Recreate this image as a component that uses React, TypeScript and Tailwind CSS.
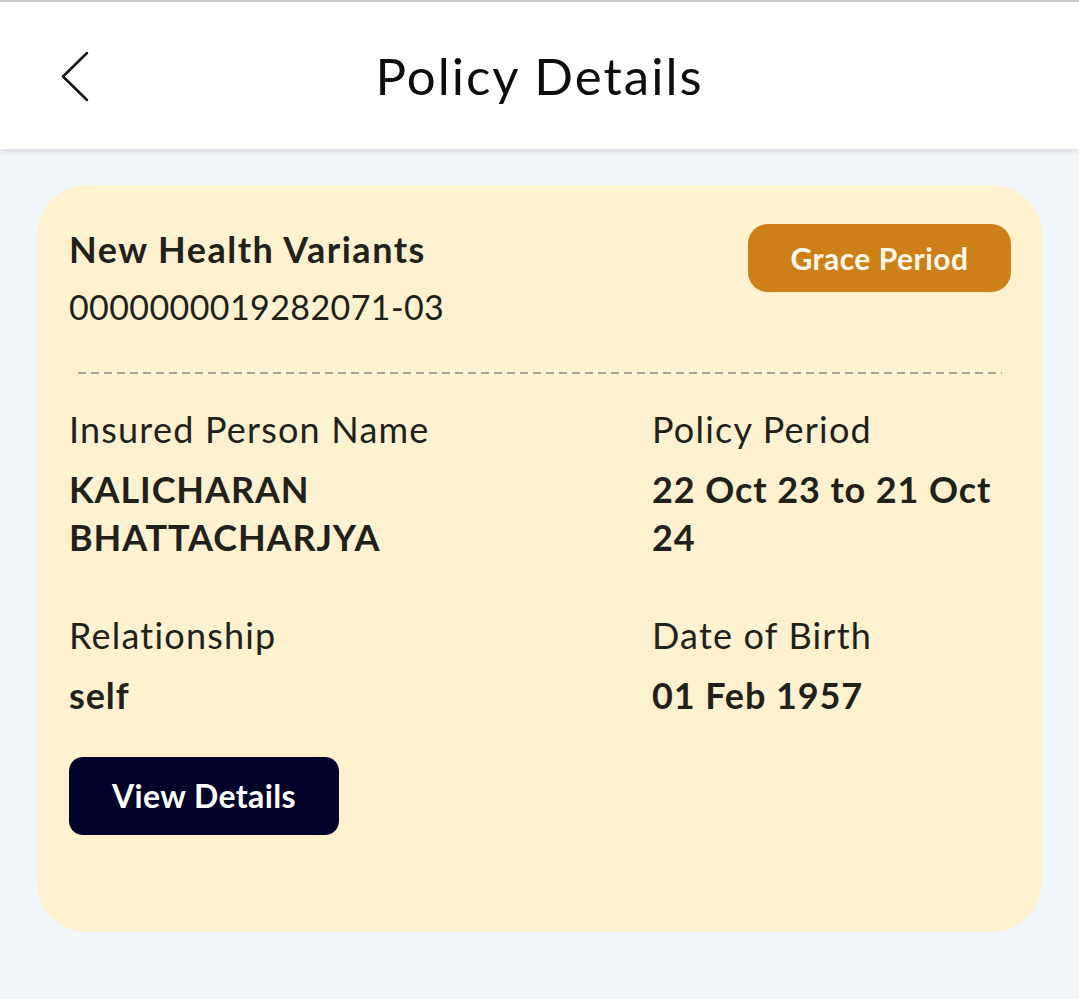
const font = { fontFamily: "Lato, 'Noto Sans', sans-serif" };

function Field({ label, value, right }: { label: string; value: string; right?: boolean }) {
  return (
    <div className={right ? "min-w-0 pr-[4px]" : "min-w-0 pr-[60px]"}>
      <p className="text-[36px] leading-[48px] tracking-[1.2px] text-[#231f1a]">{label}</p>
      <p className="mt-[12px] text-[36px] font-bold leading-[48px] tracking-[0.9px] text-[#231f1a]">{value}</p>
    </div>
  );
}

export default function App() {
  return (
    <div style={font} className="min-h-[999px] w-full bg-[#f1f6fb]">
      <header className="relative z-10 flex h-[149px] items-center border-t-2 border-[#c9c9c9] bg-white shadow-[0_2px_6px_rgba(0,0,0,0.12)]">
        <button type="button" className="absolute left-[58px] top-[49px]" aria-label="Back">
          <svg width="34" height="52" viewBox="0 0 34 52" fill="none">
            <path d="M29 2 L5 25.5 L29 49" stroke="#111" strokeWidth="2.5" strokeLinecap="round" strokeLinejoin="round" />
          </svg>
        </button>
        <h1 className="w-full text-center text-[51px] leading-none tracking-[2px] text-[#0d0d0d]">Policy Details</h1>
      </header>

      <main className="px-[37px] pt-[36px]">
        <section className="h-[747px] rounded-[50px] bg-[#fef1cf] px-[32px] pt-[40px]">
          <div className="flex items-start justify-between">
            <div>
              <h2 className="text-[36px] font-bold leading-[48px] tracking-[1.5px] text-[#231f1a]">New Health Variants</h2>
              <p className="mt-[12px] text-[34px] leading-[44px] tracking-[0.4px] text-[#231f1a]">0000000019282071-03</p>
            </div>
            <span className="-mr-[1px] mt-[-1px] flex h-[68px] w-[263px] items-center justify-center rounded-[20px] bg-[#cd8017] text-[30px] font-bold tracking-[0.5px] text-[#fff8ea]">
              Grace Period
            </span>
          </div>

          <div className="ml-[9px] mr-[8px] mt-[43px] h-[2px] bg-[repeating-linear-gradient(90deg,#a8a49b_0_8px,transparent_8px_13px)]" />

          <div className="mt-[31px] grid grid-cols-[583px_1fr] gap-y-[50px]">
            <Field label="Insured Person Name" value="KALICHARAN BHATTACHARJYA" />
            <Field label="Policy Period" value="22 Oct 23 to 21 Oct 24" right />
            <Field label="Relationship" value="self" />
            <Field label="Date of Birth" value="01 Feb 1957" right />
          </div>

          <button type="button" className="mt-[38px] flex h-[78px] w-[270px] items-center justify-center rounded-[14px] bg-[#02022a] text-[32px] font-bold tracking-[0.4px] text-white">
            View Details
          </button>
        </section>
      </main>
    </div>
  );
}
